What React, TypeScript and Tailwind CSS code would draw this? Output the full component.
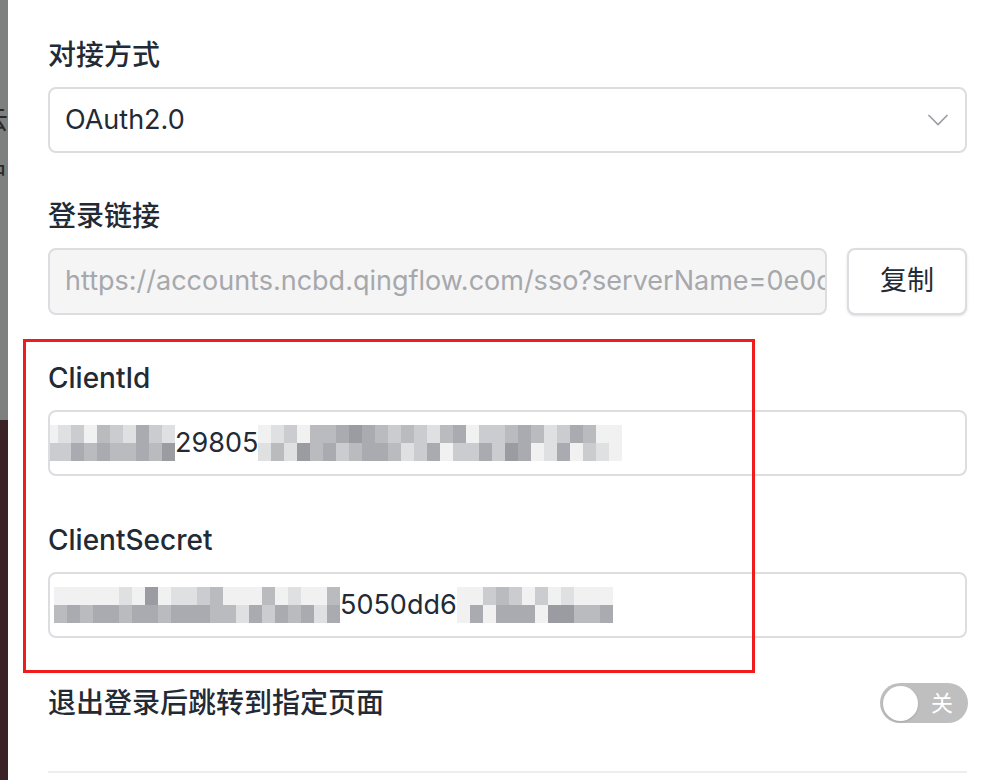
import React from "react";

const shades = [
  "bg-[#f1f1f2]",
  "bg-[#dfe0e2]",
  "bg-[#cbcccf]",
  "bg-[#babbbf]",
  "bg-[#aaabb0]",
  "bg-[#9a9ca2]",
];

// two rows of mosaic blocks, digits = shade index
function Mosaic({ rows }: { rows: [string, string] }) {
  return (
    <span className="inline-flex flex-col align-middle">
      {rows.map((row, r) => (
        <span key={r} className="flex">
          {row.split("").map((c, i) => (
            <span key={i} className={`block h-[18px] w-[13px] ${shades[Number(c)]}`} />
          ))}
        </span>
      ))}
    </span>
  );
}

function Label({ children }: { children: React.ReactNode }) {
  return <div className="h-[40px] text-[28px] font-medium leading-[40px] text-[#222a35]">{children}</div>;
}

export default function App() {
  return (
    <div
      className="relative flex h-[780px] w-full overflow-hidden bg-white"
      style={{ fontFamily: '"Inter", "Noto Sans CJK SC", sans-serif' }}
    >
      {/* edge of the page behind the drawer */}
      <div className="flex w-[8px] shrink-0 flex-col overflow-hidden">
        <div className="relative h-[420px] bg-[#7e7f7f]">
          <span className="absolute left-[-18px] top-[100px] text-[26px] text-[#2a2a2a]">云</span>
          <span className="absolute left-[-18px] top-[154px] text-[26px] text-[#2a2a2a]">户</span>
        </div>
        <div className="flex-1 bg-[#3b2226]" />
      </div>

      <div className="min-w-0 flex-1 pl-[40px] pr-[41px] pt-[35px]">
        <Label>对接方式</Label>
        <div className="mt-3 flex h-[66px] items-center justify-between rounded-lg border-2 border-[#dcdde0] pl-[15px] pr-[16px] text-[27px] text-[#222a35]">
          <span>OAuth2.0</span>
          <svg width="22" height="14" viewBox="0 0 22 14" fill="none">
            <path d="M1.5 2 L11 11.5 L20.5 2" stroke="#9a9ca1" strokeWidth="1.6" />
          </svg>
        </div>

        <div className="mt-[43px]">
          <Label>登录链接</Label>
          <div className="mt-3 flex gap-[20px]">
            <div className="flex h-[67px] min-w-0 flex-1 items-center overflow-hidden whitespace-nowrap rounded-lg border-2 border-[#dcdde0] bg-[#f5f5f5] pl-[15px] text-[27px] text-[#a6a8ac]">
              https://accounts.ncbd.qingflow.com/sso?serverName=0e0c
            </div>
            <button className="flex h-[67px] w-[120px] shrink-0 items-center justify-center rounded-lg border-2 border-[#dcdde0] bg-white text-[27px] text-[#222a35] shadow-sm">
              复制
            </button>
          </div>
        </div>

        <div className="mt-[43px]">
          <Label>ClientId</Label>
          <div className="mt-3 flex h-[66px] items-center overflow-hidden whitespace-nowrap rounded-lg border-2 border-[#dcdde0] text-[27px] text-[#222a35]">
            <span className="-ml-[5px] flex items-center">
              <Mosaic rows={["0120321421", "2243433435"]} />
              <span>29805</span>
              <Mosaic rows={["0120334543232134022343124300", "1315342344312402242540140210"]} />
            </span>
          </div>
        </div>

        <div className="mt-[44px]">
          <Label>ClientSecret</Label>
          <div className="mt-3 flex h-[66px] items-center overflow-hidden whitespace-nowrap rounded-lg border-2 border-[#dcdde0] text-[27px] text-[#222a35]">
            <span className="ml-[4px] flex items-center">
              <Mosaic rows={["0000010501123000301", "3434434434443314243"]} />
              <Mosaic rows={["003", "414"]} />
              <span>5050dd6</span>
              <Mosaic rows={["002320201000", "040444055334"]} />
            </span>
          </div>
        </div>

        <div className="mt-[45px] flex h-[40px] items-center justify-between">
          <span className="text-[28px] font-medium text-[#222a35]">退出登录后跳转到指定页面</span>
          <div className="mr-[-1px] flex h-[40px] w-[88px] items-center rounded-full bg-[#bfbfbf] pl-[3px]">
            <span className="h-[35px] w-[35px] rounded-full bg-white shadow" />
            <span className="ml-[13px] text-[22px] text-white">关</span>
          </div>
        </div>

        <div className="mt-[48px] h-[2px] bg-[#eeeeee]" />
      </div>

      {/* annotation frame */}
      <div className="pointer-events-none absolute left-[23px] top-[339px] h-[334px] w-[732px] border-[3px] border-[#ee1c1c]" />
    </div>
  );
}
